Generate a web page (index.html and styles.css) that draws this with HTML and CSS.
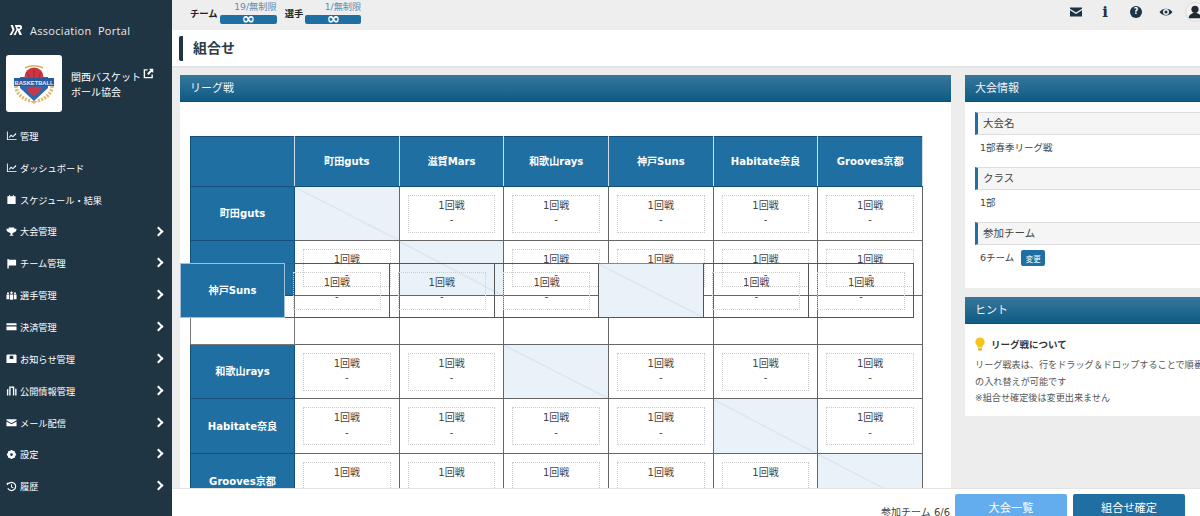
FILE: index.html
```html
<!DOCTYPE html>
<html lang="ja">
<head>
<meta charset="utf-8">
<title>組合せ</title>
<link rel="stylesheet" href="styles.css">
</head>
<body>
<aside class="sidebar">
  <div class="brand">
    <svg class="brand-mark" viewBox="0 0 14 12"><path d="M.5 11 3.500 6 1.500 1h2.300L5.600 5.500 2.800 11zM4.500 11l3-5.500L5.800 1h5.200c2.800 0 2.800 5-.3 5l2.300 5h-2.400L8.400 6.500 6.700 11zM8.300 3l.5 1.500H10.500c.9 0 .9-1.500 0-1.500z" fill="#fff"/></svg>
    <span class="brand-text">Association&nbsp; Portal</span>
  </div>
  <div class="org">
    <div class="org-logo">
      <svg viewBox="0 0 56 57" class="org-crest">
        <path d="M19 13c5-3 13-3 18 0" fill="none" stroke="#d9b45c" stroke-width="1.500"/>
        <path d="M10 31c0 7 6 13 15 15" fill="none" stroke="#e3b76a" stroke-width="3.500" stroke-dasharray="2 1.300"/>
        <path d="M46 31c0 7-6 13-15 15" fill="none" stroke="#e3b76a" stroke-width="3.500" stroke-dasharray="2 1.300"/>
        <path d="M14 22h28v11L28 46 14 33z" fill="#2d68ad"/>
        <circle cx="28" cy="22" r="9.500" fill="#cf3540"/>
        <path d="M28 13v18M20 17c4 3 4 7 0 10M36 17c-4 3-4 7 0 10" fill="none" stroke="#7d2233" stroke-width=".6"/>
        <rect x="8" y="23" width="40" height="8" fill="#2a589c"/>
        <text x="28" y="29.500" text-anchor="middle" textLength="39" lengthAdjust="spacingAndGlyphs" class="crest-text">BASKETBALL</text>
        <path d="M21 32h14l-1 5-6 4-6-4z" fill="#c43a4c"/>
        <path d="M24 46h8l-4 3z" fill="#e3b76a"/>
      </svg>
    </div>
    <div class="org-name">関西バスケット
      <svg class="ext" viewBox="0 0 12 12"><path d="M5 2H1.500v8.500H10V7" fill="none" stroke="#fff" stroke-width="1.500"/><path d="M6.500.8h4.700v4.700L9.500 4 6 7.500 4.500 6 8 2.500z" fill="#fff"/></svg>
      <br>ボール協会</div>
  </div>
  <nav class="menu">
    <a class="item"><svg class="ico" viewBox="0 0 12 12"><path d="M1 1.500h1V10h9.500v1H1z" fill="#fff"/><path d="M3 8l2.500-3 2 1.500L11 3v2L7.500 8l-2-1.500L4 8.500z" fill="#fff"/></svg><span>管理</span></a>
    <a class="item"><svg class="ico" viewBox="0 0 12 12"><path d="M1 1.500h1V10h9.500v1H1z" fill="#fff"/><path d="M3 8l2.500-3 2 1.500L11 3v2L7.500 8l-2-1.500L4 8.500z" fill="#fff"/></svg><span>ダッシュボード</span></a>
    <a class="item"><svg class="ico" viewBox="0 0 12 12"><path d="M1.500 2.500h2V1h1v1.500h3V1h1v1.500h2V11h-9z" fill="#fff"/></svg><span>スケジュール・結果</span></a>
    <a class="item"><svg class="ico" viewBox="0 0 12 12"><path d="M3 1.500h6V3h2.500c0 2.500-1 3.500-3 4L7 8v1.500l1.500 1h-5l1.500-1V8L3.500 7c-2-.5-3-1.500-3-4H3z" fill="#fff"/></svg><span>大会管理</span><i class="chev"></i></a>
    <a class="item"><svg class="ico" viewBox="0 0 12 12"><path d="M1.500 1h1.500v.8h8v6.400H3V11.500H1.500z" fill="#fff"/></svg><span>チーム管理</span><i class="chev"></i></a>
    <a class="item"><svg class="ico" viewBox="0 0 12 12"><circle cx="2.200" cy="3.500" r="1.100" fill="#fff"/><circle cx="6" cy="3" r="1.300" fill="#fff"/><circle cx="9.800" cy="3.500" r="1.100" fill="#fff"/><path d="M.5 5h3v5h-3zM4.300 4.800h3.400v5.700H4.300zM8.500 5h3v5h-3z" fill="#fff"/></svg><span>選手管理</span><i class="chev"></i></a>
    <a class="item"><svg class="ico" viewBox="0 0 12 12"><path d="M.5 2.500h11v2H.500zM.5 6h11v4H.500z" fill="#fff"/></svg><span>決済管理</span><i class="chev"></i></a>
    <a class="item"><svg class="ico" viewBox="0 0 12 12"><path fill-rule="evenodd" d="M1.500 1.500h9l1 1V11h-11V2.500zM4 3v3.500h4V3z" fill="#fff"/></svg><span>お知らせ管理</span><i class="chev"></i></a>
    <a class="item"><svg class="ico" viewBox="0 0 12 12"><path fill-rule="evenodd" d="M1 11.500V5l1.500-1v7.500zM3.500 1.500h5.500v10H7.500V3.500L5 2.800v8.700H3.500zM10 4h1.500v7.500H10z" fill="#fff"/></svg><span>公開情報管理</span><i class="chev"></i></a>
    <a class="item"><svg class="ico" viewBox="0 0 12 12"><path d="M.5 2.500h11v1L6 6.800.5 3.500z" fill="#fff"/><path d="M.5 5l5.500 3 5.500-3v5h-11z" fill="#fff"/></svg><span>メール配信</span><i class="chev"></i></a>
    <a class="item"><svg class="ico" viewBox="0 0 12 12"><path fill-rule="evenodd" d="M5 1h2l.3 1.500 1.400-.6 1.400 1.400-.6 1.400L11 5v2l-1.500.3.600 1.400-1.400 1.400-1.400-.6L7 11H5l-.3-1.500-1.400.6-1.400-1.400.6-1.400L1 7V5l1.500-.3-.6-1.400 1.400-1.400 1.400.6zM6 4.500a1.500 1.500 0 1 0 0 3 1.500 1.500 0 0 0 0-3z" fill="#fff"/></svg><span>設定</span><i class="chev"></i></a>
    <a class="item"><svg class="ico" viewBox="0 0 12 12"><path d="M2.600 3A4.500 4.500 0 1 1 2 8" fill="none" stroke="#fff" stroke-width="1.300"/><path d="M.8 1.800l3.400.2L1 5z" fill="#fff"/><path d="M6 3.500v3l2 1" fill="none" stroke="#fff" stroke-width="1.100"/></svg><span>履歴</span><i class="chev"></i></a>
  </nav>
</aside>

<div class="main">
  <header class="topbar">
    <div class="quota">
      <span class="q-label">チーム</span>
      <div class="q-box q-team"><span class="q-count">19/無制限</span><span class="pill">∞</span></div>
      <span class="q-label q-second">選手</span>
      <div class="q-box q-player"><span class="q-count">1/無制限</span><span class="pill">∞</span></div>
    </div>
    <div class="top-icons">
      <svg class="t-ico t-mail" viewBox="0 0 14 12"><path d="M1 1.500h12v1.200L7 6.500 1 2.700z" fill="#1c3446"/><path d="M1 4.200l6 3.800 6-3.800V10.500H1z" fill="#1c3446"/></svg>
      <span class="t-info">i</span>
      <span class="t-help">?</span>
      <svg class="t-ico t-eye" viewBox="0 0 14 12"><path fill-rule="evenodd" d="M.5 6C3.500 1.500 10.500 1.500 13.500 6 10.500 10.500 3.500 10.500.5 6zM7 3a3 3 0 1 0 0 6 3 3 0 0 0 0-6z" fill="#1c3446"/><circle cx="7" cy="6" r="1.500" fill="#1c3446"/></svg>
      <span class="avatar"><svg viewBox="0 0 20 20"><circle cx="10" cy="7" r="4" fill="#1f2b33"/><path d="M3 17c0-4 3-5 5-6h4c2 1 5 2 5 6z" fill="#1f2b33"/></svg></span>
    </div>
  </header>

  <div class="title-bar"><h1>組合せ</h1></div>

  <div class="content">
    <section class="card board">
      <h2 class="card-head">リーグ戦</h2>
      <div class="board-body">
        <div class="table-wrap">
          <table class="league">
            <tr class="r-head"><th></th><th>町田guts</th><th>滋賀Mars</th><th>和歌山rays</th><th>神戸Suns</th><th>Habitate奈良</th><th>Grooves京都</th></tr>
            <tr class="r-a"><th>町田guts</th><td class="diag"></td><td><div class="game">1回戦<br>-</div></td><td><div class="game">1回戦<br>-</div></td><td><div class="game">1回戦<br>-</div></td><td><div class="game">1回戦<br>-</div></td><td><div class="game">1回戦<br>-</div></td></tr>
            <tr class="r-b"><th>滋賀Mars</th><td><div class="game">1回戦<br>-</div></td><td class="diag"></td><td><div class="game">1回戦<br>-</div></td><td><div class="game">1回戦<br>-</div></td><td><div class="game">1回戦<br>-</div></td><td><div class="game">1回戦<br>-</div></td></tr>
            <tr class="r-gap"><td></td><td></td><td></td><td></td><td></td><td></td><td></td></tr>
            <tr class="r-a"><th>和歌山rays</th><td><div class="game">1回戦<br>-</div></td><td><div class="game">1回戦<br>-</div></td><td class="diag"></td><td><div class="game">1回戦<br>-</div></td><td><div class="game">1回戦<br>-</div></td><td><div class="game">1回戦<br>-</div></td></tr>
            <tr class="r-b"><th>Habitate奈良</th><td><div class="game">1回戦<br>-</div></td><td><div class="game">1回戦<br>-</div></td><td><div class="game">1回戦<br>-</div></td><td><div class="game">1回戦<br>-</div></td><td class="diag"></td><td><div class="game">1回戦<br>-</div></td></tr>
            <tr class="r-b"><th>Grooves京都</th><td><div class="game">1回戦<br>-</div></td><td><div class="game">1回戦<br>-</div></td><td><div class="game">1回戦<br>-</div></td><td><div class="game">1回戦<br>-</div></td><td><div class="game">1回戦<br>-</div></td><td class="diag"></td></tr>
          </table>
          <table class="league dragging">
            <tr><th>神戸Suns</th><td><div class="game">1回戦<br>-</div></td><td><div class="game">1回戦<br>-</div></td><td><div class="game">1回戦<br>-</div></td><td class="diag"></td><td><div class="game">1回戦<br>-</div></td><td><div class="game">1回戦<br>-</div></td></tr>
          </table>
        </div>
      </div>
    </section>

    <div class="side">
      <section class="card info">
        <h2 class="card-head">大会情報</h2>
        <div class="info-body">
          <h3 class="info-label">大会名</h3>
          <p class="info-value">1部春季リーグ戦</p>
          <h3 class="info-label">クラス</h3>
          <p class="info-value">1部</p>
          <h3 class="info-label">参加チーム</h3>
          <p class="info-value info-last"><span>6チーム</span><button class="mini">変更</button></p>
        </div>
      </section>
      <section class="card hint">
        <h2 class="card-head">ヒント</h2>
        <div class="hint-body">
          <div class="hint-title">
            <svg class="bulb" viewBox="0 0 10 14"><path d="M5 .5a4.500 4.500 0 0 1 2.500 8.300V10.500h-5V8.800A4.500 4.500 0 0 1 5 .5z" fill="#f5c518"/><path d="M3 11.300h4V13l-1 .8H4L3 13z" fill="#e0b040"/></svg>
            <strong>リーグ戦について</strong>
          </div>
          <p class="hint-text">リーグ戦表は、行をドラッグ＆ドロップすることで順番<br>の入れ替えが可能です<br>※組合せ確定後は変更出来ません</p>
        </div>
      </section>
    </div>
  </div>

  <footer class="footer">
    <span class="f-count">参加チーム 6/6</span>
    <button class="f-btn f-light">大会一覧</button>
    <button class="f-btn f-dark">組合せ確定</button>
  </footer>
</div>
</body>
</html>
```
FILE: styles.css
```css
* { box-sizing: border-box; }
html, body { height: 100%; }
body {
  margin: 0;
  width: 1200px;
  height: 516px;
  overflow: hidden;
  display: flex;
  background: #fff;
  color: #444;
  font-family: "DejaVu Sans", "Noto Sans CJK JP", sans-serif;
  font-size: 10px;
}
h1, h2, h3, p { margin: 0; font-weight: normal; }

/* sidebar */
.sidebar {
  width: 172px;
  flex: none;
  background: #203544;
  color: #fff;
  padding-top: 22px;
}
.brand { display: flex; align-items: center; gap: 7px; padding-left: 9px; height: 16px; }
.brand-mark { width: 14px; height: 12px; }
.brand-text { font-family: "Open Sans", sans-serif; font-size: 11px; letter-spacing: .3px; color: #e6ebee; white-space: nowrap; }
.org { display: flex; align-items: center; gap: 9px; padding: 17px 0 0 6px; }
.org-logo { width: 56px; height: 57px; background: #fff; border-radius: 3px; flex: none; }
.org-crest { width: 56px; height: 57px; display: block; }
.crest-text { font-family: "Liberation Sans", sans-serif; font-size: 6px; font-weight: bold; fill: #e8eef6; }
.org-name { font-size: 10px; line-height: 15px; color: #fff; white-space: nowrap; }
.ext { width: 11px; height: 11px; margin-left: -1px; vertical-align: 2px; }
.menu { padding-top: 8px; }
.item { display: flex; align-items: center; height: 31.850px; padding-left: 6px; position: relative; color: #fff; }
.item span { margin-left: 3px; font-size: 9.200px; white-space: nowrap; }
.ico { width: 11px; height: 11px; flex: none; }
.chev {
  position: absolute; left: 155px; top: 12px;
  width: 7px; height: 7px;
  border-top: 2px solid #fff; border-right: 2px solid #fff;
  transform: rotate(45deg);
}

/* main column */
.main { flex: 1; min-width: 0; display: flex; flex-direction: column; background: #ededed; overflow: hidden; }
.topbar { height: 30px; flex: none; display: flex; justify-content: space-between; background: #eee; }
.quota { display: flex; align-items: flex-start; padding-left: 18px; }
.q-label { margin-top: 6px; font-size: 9.300px; color: #222; font-weight: bold; white-space: nowrap; }
.q-second { margin-left: 8px; }
.q-box { display: flex; flex-direction: column; align-items: flex-end; margin-left: 2px; }
.q-team { width: 57px; }
.q-player { width: 56px; }
.q-count { font-size: 9.200px; line-height: 13px; color: #5a8db3; white-space: nowrap; }
.pill { width: 100%; height: 9px; margin-top: 2px; background: #1f6fa3; color: #fff; border-radius: 2px; text-align: center; font-size: 16px; font-weight: bold; line-height: 8px; }
.top-icons { display: flex; align-items: center; height: 24px; margin-right: -5px; }
.t-ico { width: 14px; height: 12px; flex: none; }
.t-info { width: 8px; margin-left: 18px; font-family: "DejaVu Serif", serif; font-weight: bold; font-size: 15px; line-height: 16px; color: #1c3446; text-align: center; }
.t-help { width: 12px; height: 12px; margin-left: 21px; border-radius: 50%; background: #1c3446; color: #fff; font-size: 8px; font-weight: bold; text-align: center; line-height: 12px; }
.t-eye { margin-left: 17px; }
.avatar { width: 20px; height: 20px; margin-left: 12px; border-radius: 50%; background: #f1f1f1; border: 1px solid #ddd; overflow: hidden; flex: none; }
.avatar svg { display: block; width: 100%; height: 100%; }

.title-bar { height: 36px; flex: none; background: #fff; display: flex; align-items: center; padding-left: 7px; box-shadow: 0 1px 2px rgba(0,0,0,.08); }
.title-bar h1 { font-size: 14px; font-weight: bold; color: #2f3b44; line-height: 25px; padding-left: 10px; border-left: 4px solid #203544; border-radius: 2px; }

/* content */
.content { flex: 1; min-height: 0; display: flex; align-items: flex-start; gap: 14px; padding: 9px 0 0 8px; overflow: hidden; }
.card { background: #fff; flex: none; }
.card-head {
  height: 27px; padding-left: 10px;
  background: linear-gradient(#37779b, #0e5b84);
  border-bottom: 1px solid #0d5279;
  color: #f2f6f9; font-size: 11px; line-height: 28px;
}
.board { width: 771px; height: 420px; }
.board-body { padding: 34px 0 0 10px; }
.table-wrap { position: relative; width: 733px; }

.league { border-collapse: collapse; table-layout: fixed; width: 733px; }
.league th, .league td { padding: 0; text-align: center; vertical-align: middle; border: 1px solid #666; }
.league th { padding-bottom: 2px; background: #1f6fa3; color: #fff; font-size: 10.100px; font-weight: bold; border-color: #134f78; white-space: nowrap; }
.r-head th { border-right-color: #cfdde8; }
.r-head th:first-child { width: 104px; }
.r-head { height: 50px; }
.r-a { height: 54px; }
.r-b { height: 55px; }
.r-gap { height: 49px; }
.league .r-gap td { background: #fff; }
.league .r-gap td:first-child { border-color: #777; }
.league td.diag {
  background: linear-gradient(to top right, transparent calc(50% - .7px), #cfd5da 50%, transparent calc(50% + .7px)), #eaf2f9;
}
.game {
  height: 38px; margin: 0 8px;
  border: 1px dotted #cdcdcd;
  font-size: 10px; line-height: 14.500px; color: #444;
  padding-top: 3px; white-space: nowrap;
}

.dragging { position: absolute; left: -10px; top: 127px; width: 734px; }
.dragging tr { height: 54px; }
.dragging th { width: 104px; border-color: #9fc0d8; }
.league.dragging td { background: transparent; border-color: #555; }
.league.dragging td.diag {
  border-top-color: #888;
  background: linear-gradient(to top right, transparent calc(50% - .7px), #cfd5da 50%, transparent calc(50% + .7px)), #eaf2f9;
}

/* side */
.side { width: 250px; flex: none; display: flex; flex-direction: column; gap: 9px; }
.info { height: 213px; }
.info-body { padding: 10px 0 0 10px; }
.info-label {
  height: 23px; padding-left: 5px;
  background: #f5f5f5;
  border-left: 3px solid #1f6fa3;
  border-top: 1px solid #ddd;
  border-bottom: 1px solid #ddd;
  font-size: 10.500px; line-height: 21px; color: #444;
}
.info-value { height: 32px; padding: 6px 0 0 5px; font-size: 9.500px; line-height: 14px; color: #444; }
.info-last { display: flex; align-items: center; gap: 7px; height: 21px; padding-top: 5px; }
.mini { width: 24px; height: 16px; padding: 0; border: 0; border-radius: 2px; background: #1f6fa3; color: #fff; font-family: inherit; font-size: 7.500px; }
.hint { height: 119px; }
.hint-body { padding: 12px 0 0 10px; }
.hint-title { display: flex; align-items: center; gap: 6px; height: 15px; }
.hint-title strong { font-size: 9.500px; font-weight: bold; color: #333; white-space: nowrap; }
.bulb { width: 10px; height: 14px; flex: none; }
.hint-text { margin-top: 6px; font-size: 9.150px; line-height: 16.500px; color: #555; white-space: nowrap; }

/* footer */
.footer { height: 28px; flex: none; background: #fff; border-top: 1px solid #e4e4e4; display: flex; justify-content: flex-end; align-items: flex-start; gap: 6px; padding: 5px 15px 0 0; overflow: hidden; }
.f-count { margin: 10px -1px 0 0; font-size: 10px; color: #444; white-space: nowrap; }
.f-btn { width: 112px; height: 30px; flex: none; border: 0; border-radius: 2px; color: #fff; font-family: inherit; font-size: 11.200px; padding: 0 0 4px; }
.f-light { background: #63acee; }
.f-dark { background: #1f6fa3; }
```
